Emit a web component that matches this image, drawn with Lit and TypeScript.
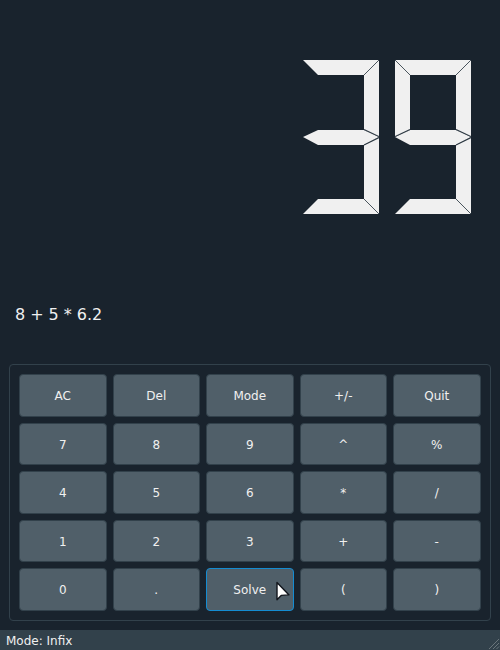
import { LitElement, html, svg, css } from "lit";
import { customElement, property, state } from "lit/decorators.js";
import { classMap } from "lit/directives/class-map.js";

const LIT: Record<string, string> = {
  "0": "abcdef", "1": "bc", "2": "abdeg", "3": "abcdg", "4": "bcfg",
  "5": "acdfg", "6": "acdefg", "7": "abc", "8": "abcdefg", "9": "abcdfg", "-": "g",
};

// Seams between neighbouring segments: pair, x1, y1, x2, y2, mitred corner or not
const SEAMS: [string, number, number, number, number, boolean][] = [
  ["ab", 76, 0, 61, 15, true],
  ["af", 0, 0, 15, 15, true],
  ["cd", 61, 139, 76, 154, true],
  ["de", 0, 154, 15, 139, true],
  ["bg", 61, 69.6, 76, 76.6, false],
  ["cg", 61, 84.9, 76, 77.6, false],
  ["fg", 0, 76.6, 15, 69.6, false],
  ["eg", 0, 77.6, 15, 84.9, false],
];

@customElement("lcd-digit")
export class LcdDigit extends LitElement {
  @property() value = "8";

  static styles = css`
    :host { display: grid; width: 76px; height: 154px; }
    .seg, svg { grid-area: 1 / 1; width: 76px; height: 154px; }
    svg { z-index: 1; }
    .seg { background: #f0f0f0; }
    .a { clip-path: polygon(0 0, 76px 0, 61px 15px, 15px 15px); }
    .b { clip-path: polygon(76px 0, 76px 77px, 61px 70px, 61px 15px); }
    .c { clip-path: polygon(76px 77px, 76px 154px, 61px 139px, 61px 85px); }
    .d { clip-path: polygon(0 154px, 15px 139px, 61px 139px, 76px 154px); }
    .e { clip-path: polygon(0 77px, 15px 85px, 15px 139px, 0 154px); }
    .f { clip-path: polygon(0 0, 15px 15px, 15px 70px, 0 77px); }
    .g { clip-path: polygon(0 77px, 15px 70px, 61px 70px, 76px 77px, 61px 85px, 15px 85px); }
    line { stroke: #2c3842; stroke-width: 1.1; }
    .mitre { stroke: #4a555d; stroke-width: 1; }
  `;

  render() {
    const on = LIT[this.value] ?? "";
    return html`
      ${[...on].map((s) => html`<div class="seg ${s}"></div>`)}
      <svg viewBox="0 0 76 154" aria-hidden="true">
        ${SEAMS.filter(([pair]) => on.includes(pair[0]) && on.includes(pair[1])).map(
          ([, x1, y1, x2, y2, mitre]) =>
            svg`<line class=${mitre ? "mitre" : "inner"} x1=${x1} y1=${y1} x2=${x2} y2=${y2}></line>`
        )}
      </svg>
    `;
  }
}

@customElement("app-root")
export class AppRoot extends LitElement {
  @state() private result = "39";
  @state() private expression = "8 + 5 * 6.2";
  @state() private mode = "Infix";
  @state() private hovered = "Solve";

  private keys = [
    "AC", "Del", "Mode", "+/-", "Quit",
    "7", "8", "9", "^", "%",
    "4", "5", "6", "*", "/",
    "1", "2", "3", "+", "-",
    "0", ".", "Solve", "(", ")",
  ];

  static styles = css`
    :host {
      display: flex;
      flex-direction: column;
      box-sizing: border-box;
      width: 500px;
      height: 650px;
      overflow: hidden;
      background: #19232d;
      color: #f0f0f0;
      font: 12px/14px "DejaVu Sans", sans-serif;
    }
    .display {
      display: flex;
      justify-content: flex-end;
      gap: 16px;
      box-sizing: border-box;
      height: 274px;
      padding: 60px 29px 0 0;
    }
    .expression {
      height: 90px;
      box-sizing: border-box;
      padding: 31px 15px 0;
      font-size: 16px;
      line-height: 19px;
      letter-spacing: -0.04px;
    }
    .keypad {
      display: grid;
      grid-template-columns: 88px 87px 88px 87px 88px;
      grid-template-rows: 43px 42px 43px 42px 43px;
      gap: 6px;
      margin: 0 9px 9px;
      padding: 9px;
      border: 1px solid #32414b;
      border-radius: 4px;
    }
    button {
      position: relative;
      box-sizing: border-box;
      margin: 0;
      padding: 0 0.5px 0 0;
      border: 1px solid #32414b;
      border-radius: 4px;
      background: #505f69;
      color: #f0f0f0;
      font: inherit;
    }
    button.short { padding-top: 2px; }
    button.hover { border-color: #148cd2; }
    .pointer {
      position: absolute;
      left: 69px;
      top: 12px;
      width: 14px;
      height: 20px;
    }
    .status {
      display: flex;
      justify-content: space-between;
      align-items: flex-end;
      height: 20px;
      background: #32414b;
    }
    .mode { padding: 0 0 2px 6px; }
    .grip { display: block; width: 12px; height: 12px; }
  `;

  render() {
    return html`
      <div class="display" role="img" aria-label=${this.result}>
        ${[...this.result].map((d) => html`<lcd-digit .value=${d}></lcd-digit>`)}
      </div>
      <div class="expression">${this.expression}</div>
      <div class="keypad">
        ${this.keys.map((k, i) => html`
          <button class=${classMap({ hover: k === this.hovered, short: Math.floor(i / 5) % 2 === 1 })}>${k}${k === this.hovered
            ? html`<svg class="pointer" viewBox="0 0 14 20" aria-hidden="true">
                <path d="M1 1.4V18.8L5.2 14.4L13 13.9Z" fill="#fff" stroke="#11151c" stroke-width="1.4" stroke-linejoin="round"></path>
              </svg>`
            : ""}</button>`)}
      </div>
      <div class="status">
        <span class="mode">Mode: ${this.mode}</span>
        <svg class="grip" viewBox="0 0 12 12" aria-hidden="true">
          <path d="M1 11L11 1M5 11L11 5M8.5 11L11 8.5" fill="none" stroke="#6a757b" stroke-width="1"></path>
        </svg>
      </div>
    `;
  }
}
